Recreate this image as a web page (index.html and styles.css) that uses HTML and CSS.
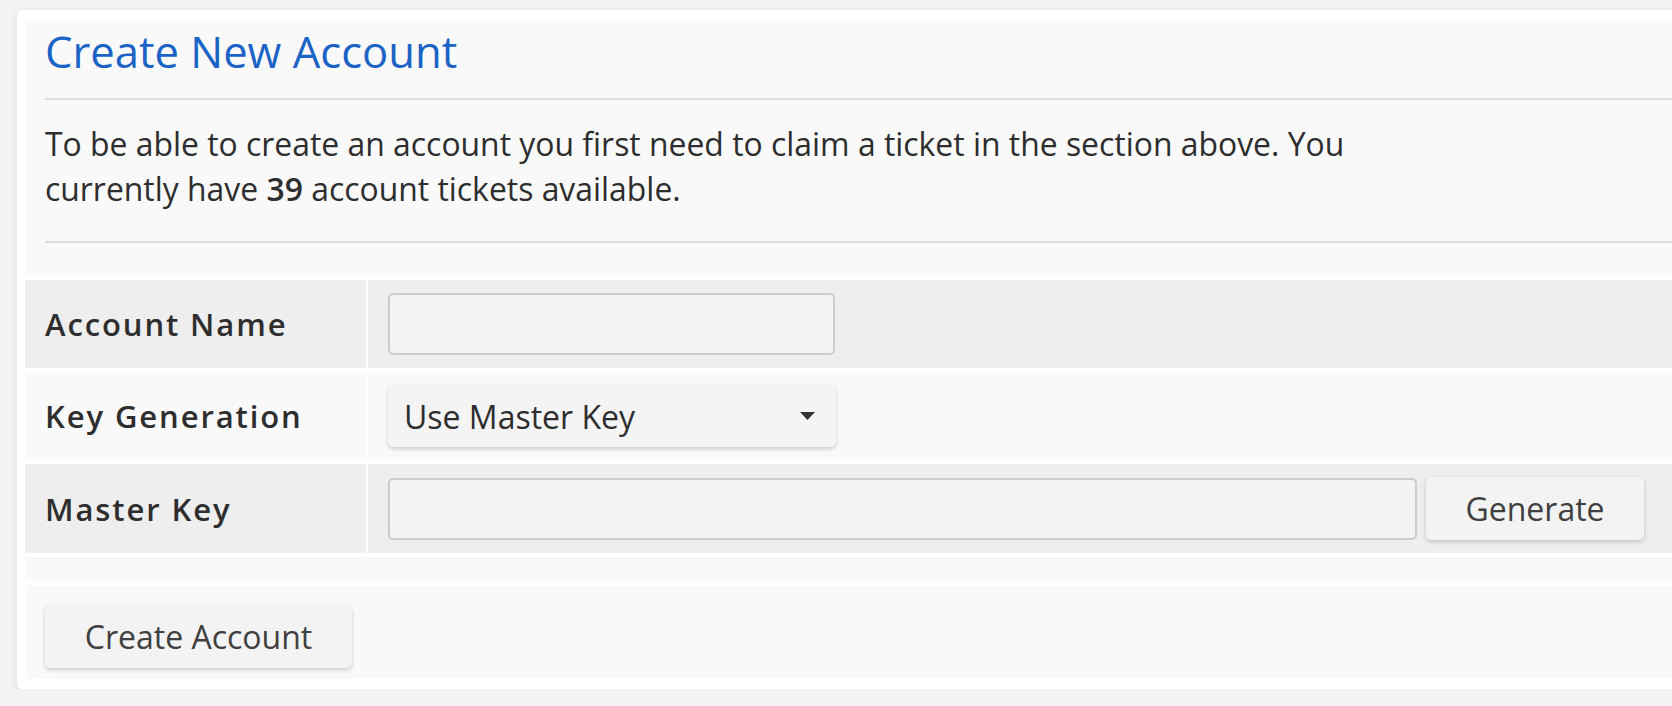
FILE: index.html
```html
<!DOCTYPE html>
<html lang="en">
<head>
<meta charset="utf-8">
<title>Create New Account</title>
<link rel="stylesheet" href="styles.css">
</head>
<body>
<div class="card">
  <div class="panel">
    <div class="intro">
      <h2 class="title">Create New Account</h2>
      <div class="note">
        <p class="lead">To be able to create an account you first need to claim a ticket in the section above. You currently have <strong>39</strong> account tickets available.</p>
      </div>
    </div>
    <div class="form">
      <div class="row shade">
        <div class="label">Account Name</div>
        <div class="value"><input class="field name" type="text"></div>
      </div>
      <div class="row">
        <div class="label">Key Generation</div>
        <div class="value">
          <div class="select">
            <span>Use Master Key</span>
            <svg class="caret" width="15" height="8" viewBox="0 0 15 8"><polygon points="0,0 15,0 7.5,8" fill="#333"/></svg>
          </div>
        </div>
      </div>
      <div class="row shade">
        <div class="label">Master Key</div>
        <div class="value"><input class="field key" type="text"><button class="btn gen" type="button">Generate</button></div>
      </div>
      <div class="spacer"></div>
      <div class="actions"><button class="btn create" type="button">Create Account</button></div>
    </div>
  </div>
</div>
</body>
</html>
```

FILE: styles.css
```css
body {
  margin: 0;
  background: #f3f3f3;
  font-family: "Open Sans", "Noto Sans", sans-serif;
  color: #333;
  overflow: hidden;
}
.card {
  margin: 10px 0 0 17px;
  width: 1700px;
  background: #fff;
  border-radius: 5px;
  padding: 10px 0 10px 8px;
  box-shadow: 0 3px 8px rgba(0, 0, 0, 0.1);
}
.panel {
  background: #f9f9f9;
}
.intro {
  padding: 6px 0 33px 20px;
}
.title {
  margin: 0;
  font-size: 43.6px;
  line-height: 50px;
  font-weight: 400;
  color: #1c63c6;
  padding-bottom: 22px;
  border-bottom: 2px solid #ddd;
}
.note {
  padding: 21px 0 30px;
  border-bottom: 2px solid #ddd;
}
.lead {
  margin: 0;
  font-size: 31.9px;
  line-height: 45px;
  max-width: 1345px;
  color: #2e2e2e;
}
.lead strong {
  font-weight: 600;
}
.row {
  display: grid;
  grid-template-columns: 341px 1fr;
  column-gap: 2px;
  background: #fff;
  border-top: 4px solid #fff;
}
.label,
.value {
  background: #f9f9f9;
}
.shade .label,
.shade .value {
  background: #eee;
}
.label {
  display: flex;
  align-items: center;
  padding-left: 20px;
  font-size: 31px;
  font-weight: 600;
  letter-spacing: 1.9px;
  color: #2e2e2e;
}
.value {
  display: flex;
  align-items: center;
  gap: 9px;
  padding: 13px 20px;
}
.field {
  box-sizing: border-box;
  height: 62px;
  border: 2px solid #ccc;
  border-radius: 5px;
  background: #f4f4f4;
  font: inherit;
  margin: 0;
}
.field.name {
  width: 447px;
}
.field.key {
  width: 1029px;
}
.select {
  box-sizing: border-box;
  width: 448px;
  height: 62px;
  display: flex;
  align-items: center;
  justify-content: space-between;
  padding: 0 21px 0 16px;
  background: #f4f4f4;
  border-radius: 5px;
  box-shadow: 0 2px 4px rgba(0, 0, 0, 0.18);
  font-size: 32px;
  color: #2e2e2e;
}
.btn {
  box-sizing: border-box;
  height: 63px;
  margin: 0;
  border: 0;
  border-radius: 5px;
  background: #f3f3f3;
  box-shadow: 0 2px 4px rgba(0, 0, 0, 0.18);
  font-family: inherit;
  font-size: 32px;
  color: #404040;
  padding: 0;
}
.btn.gen {
  width: 218px;
}
.btn.create {
  width: 307px;
}
.spacer {
  height: 24px;
  border-top: 4px solid #fff;
}
.actions {
  border-top: 4px solid #fff;
  padding: 20px 20px 11px;
}
```
